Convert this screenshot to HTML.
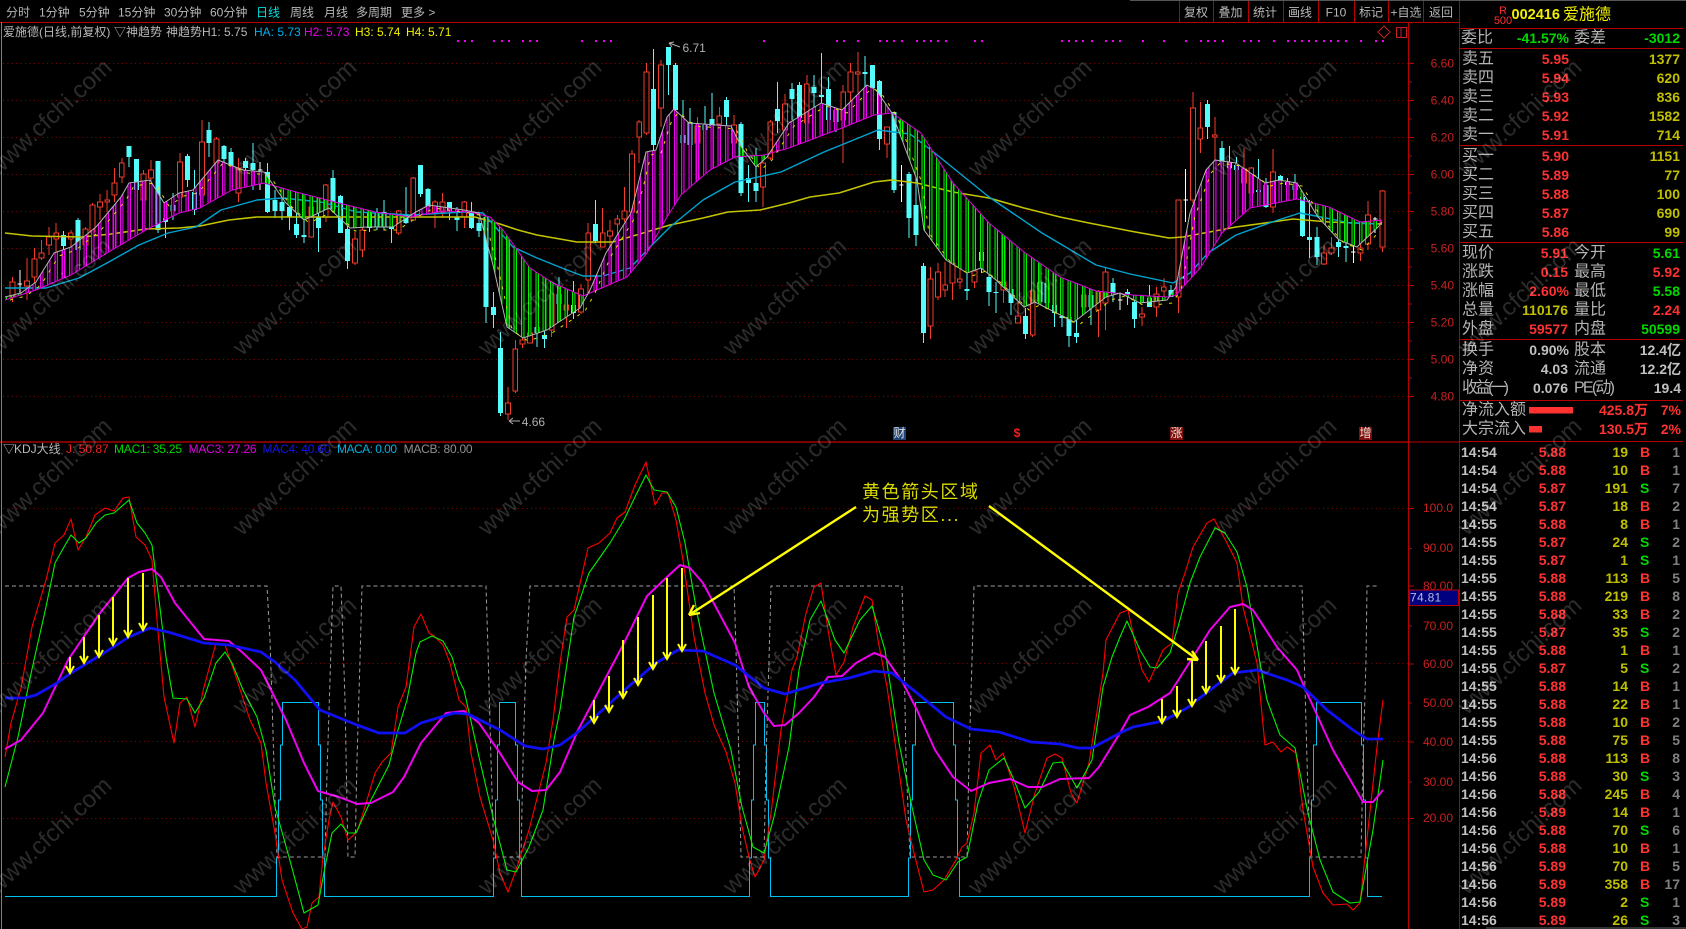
<!DOCTYPE html>
<html><head><meta charset="utf-8"><title>爱施德</title>
<style>
html,body{margin:0;padding:0;background:#000;width:1686px;height:929px;overflow:hidden}
svg{display:block}
text{font-family:"Liberation Sans","Noto Sans CJK SC",sans-serif;dominant-baseline:central;white-space:pre}
.v{vector-effect:non-scaling-stroke}
.e{text-anchor:end}.m{text-anchor:middle}
.tb text{font-size:12px;fill:#b8b8b8}
.ax text{font-size:12px;fill:#c82020;text-anchor:end}
.lb text{font-size:16px;fill:#b4b4b4}
.n text{font-size:14px;font-weight:bold;text-anchor:end}
.r{fill:#ff3232}.g{fill:#00d800}.y{fill:#c0c000}.w{fill:#c0c0c0}.d{fill:#808080}
.tk text{font-size:14px;font-weight:bold}
.wm text{font-size:24px;fill:#fff;fill-opacity:.17}
polyline{stroke-linejoin:round}
</style></head><body>
<svg xmlns="http://www.w3.org/2000/svg" width="1686" height="929" viewBox="0 0 1686 929">
<defs>
<clipPath id="hc"><path clip-rule="evenodd" d="M5 297L21 293 36 282 54 253 71 247 96 227 121 197 129 183 150 180 164 203 179 193 193 190 218 160 243 170 264 172 286 203 304 220 329 208 350 228 368 227 393 227 414 213 429 205 464 210 479 213 493 265 507 327 523 338 547 330 580 308 590 290 606 253 631 213 646 152 656 150 667 117 674 109 689 123 731 126 742 148 756 167 767 157 789 123 821 103 842 110 867 85 876 90 892 113 917 180 924 230 946 260 967 273 981 268 996 280 1024 307 1035 302 1074 322 1106 297 1120 293 1140 303 1167 300 1176 287 1190 213 1206 170 1215 160 1236 163 1265 183 1279 180 1297 183 1318 217 1339 240 1357 247 1378 227 1382 222 1382 220 1360 222 1329 207 1297 199 1250 208 1222 233 1201 267 1176 295 1167 297 1133 295 1096 291 1060 277 1024 252 989 223 953 183 921 133 892 113 874 115 842 128 789 148 764 155 735 157 710 170 681 195 667 217 647 253 627 277 597 290 583 296 553 283 530 268 503 230 490 217 470 212 443 211 411 217 375 212 339 203 296 192 264 183 232 190 200 208 179 213 146 230 107 253 71 275 36 290 14 297 5 300Z"/></clipPath>
</defs>
<rect width="1686" height="929" fill="#000"/>

<!-- grid -->
<path fill="none" stroke="#8c0808" stroke-dasharray="1 3.4" d="M3 63.5H1408M3 100.5H1408M3 137.5H1408M3 174.5H1408M3 211.5H1408M3 248.5H1408M3 285.5H1408M3 322.5H1408M3 359.5H1408M3 396.5H1408M3 508.5H1408M3 663.5H1408M3 741.5H1408M3 818.5H1408"/>

<!-- candles -->
<g transform="translate(5.2 0) scale(7.287 1)" fill="none" shape-rendering="crispEdges">
<path class="v" stroke="#f03c28" stroke-width="1" d="M1 277V302M3 258V300M4 248V287M5 240V260M6 227V255M7 223V253M9 230V248M11 227V252M12 203V233M13 194V220M14 190V212M15 168V202M16 158V183M19 170V202M20 160V197M24 153V213M27 120V197M29 137V173M32 158V202M42 197V237M44 184V222M48 232V265M49 213V257M54 210V235M56 177V221M59 200V228M60 193V217M63 201V228M69 387V420M70 340V393M71 335V348M72 325V343M75 285V337M77 300V328M79 284V314M80 223V293M82 208V247M83 220V260M84 215V240M85 187V222M86 150V213M87 120V163M88 63V135M90 60V127M95 117V143M98 107V127M100 115V147M104 155V207M105 120V160M107 94V143M110 75V135M115 85V163M116 63V107M117 52V93M121 127V158M127 267V339M128 263V300M129 262V297M130 262V300M131 267V289M133 268V288M137 280V303M139 297V323M141 290V337M148 287V313M150 290V337M151 267V330M156 307V326M158 287V317M159 278V298M161 200V313M163 92V203M164 102V153M166 117V163M170 148V200M171 167V197M174 149V213M181 245V265M182 237V255M186 233V261M187 201V250M189 190V252"/>
<path class="v" stroke="#f03c28" fill="#000" stroke-width="1" d="M.67 282h.66V297h-.66zM2.67 281h.66V286h-.66zM3.67 259h.66V277h-.66zM4.67 253h.66V258h-.66zM5.67 237h.66V245h-.66zM6.67 233h.66V239h-.66zM8.67 233h.66V239h-.66zM10.67 229h.66V245h-.66zM11.67 205h.66V232h-.66zM12.67 202h.66V207h-.66zM13.67 200h.66V202h-.66zM14.67 183h.66V195h-.66zM15.67 163h.66V177h-.66zM18.67 174h.66V200h-.66zM19.67 170h.66V178h-.66zM23.67 162h.66V197h-.66zM26.67 142h.66V195h-.66zM28.67 139h.66V163h-.66zM31.67 168h.66V193h-.66zM41.67 207h.66V237h-.66zM43.67 185h.66V217h-.66zM47.67 239h.66V263h-.66zM48.67 230h.66V250h-.66zM53.67 211h.66V233h-.66zM55.67 178h.66V220h-.66zM58.67 202h.66V213h-.66zM59.67 202h.66V212h-.66zM62.67 202h.66V217h-.66zM68.67 403h.66V414h-.66zM69.67 349h.66V391h-.66zM70.67 340h.66V344h-.66zM71.67 333h.66V343h-.66zM74.67 294h.66V330h-.66zM76.67 305h.66V310h-.66zM78.67 289h.66V312h-.66zM79.67 233h.66V280h-.66zM81.67 233h.66V247h-.66zM82.67 231h.66V236h-.66zM83.67 219h.66V224h-.66zM84.67 211h.66V219h-.66zM85.67 154h.66V212h-.66zM86.67 122h.66V137h-.66zM87.67 72h.66V133h-.66zM89.67 65h.66V108h-.66zM94.67 126h.66V143h-.66zM97.67 116h.66V124h-.66zM99.67 125h.66V143h-.66zM103.67 163h.66V187h-.66zM104.67 122h.66V158h-.66zM106.67 104h.66V130h-.66zM109.67 84h.66V123h-.66zM114.67 92h.66V120h-.66zM115.67 72h.66V92h-.66zM116.67 72h.66V74h-.66zM120.67 127h.66V144h-.66zM126.67 279h.66V326h-.66zM127.67 272h.66V297h-.66zM128.67 285h.66V290h-.66zM129.67 263h.66V283h-.66zM130.67 279h.66V282h-.66zM132.67 271h.66V282h-.66zM136.67 282h.66V290h-.66zM138.67 316h.66V323h-.66zM140.67 291h.66V335h-.66zM147.67 295h.66V307h-.66zM149.67 292h.66V310h-.66zM150.67 272h.66V303h-.66zM155.67 314h.66V317h-.66zM157.67 294h.66V307h-.66zM158.67 287h.66V291h-.66zM160.67 200h.66V297h-.66zM162.67 108h.66V200h-.66zM163.67 128h.66V139h-.66zM165.67 135h.66V137h-.66zM169.67 169h.66V183h-.66zM170.67 168h.66V193h-.66zM173.67 172h.66V207h-.66zM180.67 253h.66V264h-.66zM181.67 248h.66V253h-.66zM185.67 248h.66V253h-.66zM186.67 215h.66V244h-.66zM188.67 191h.66V247h-.66z"/>
<path class="v" stroke="#54fcfc" stroke-width="1" d="M8 231V252M10 218V258M17 146V167M18 159V200M21 161V233M22 202V238M23 193V220M25 154V187M26 170V215M28 122V157M30 145V167M31 148V187M33 158V177M34 143V190M36 163V213M37 190V218M38 197V220M39 190V230M40 200V238M41 213V243M43 207V252M45 170V210M46 195V233M47 213V269M50 210V232M51 208V230M52 200V230M53 215V243M55 187V224M57 165V197M58 188V213M61 202V220M62 207V231M64 202V229M65 218V237M66 217V323M67 292V328M68 332V416M73 327V347M74 323V348M76 277V315M78 281V319M81 200V243M89 49V153M91 47V95M92 63V127M93 100V143M94 108V145M96 106V145M97 93V130M99 97V125M101 122V196M102 165V202M103 148V202M106 82V133M108 83V120M109 82V120M111 75V113M112 53V115M113 77V123M114 108V132M118 56V93M119 65V92M120 80V150M122 112V193M124 172V238M125 140V246M126 263V343M132 273V300M134 243V273M135 267V306M136 282V313M138 283V315M140 308V339M142 280V305M143 275V305M144 293V327M145 297V327M146 310V347M147 310V343M149 290V325M152 278V302M154 289V305M155 295V328M157 285V307M160 285V297M165 100V139M167 141V173M168 146V180M169 157V180M172 159V200M173 178V208M175 175V187M176 178V195M177 174V197M178 197V237M179 200V258M180 227V265M183 235V257M184 243V262"/>
<path class="v" stroke="#54fcfc" stroke-width="5" d="M8 235V246M10 220V250M17 146V157M18 159V190M21 161V230M22 218V222M23 205V211M25 156V180M26 192V210M28 130V143M30 146V159M31 152V166M33 161V168M34 163V170M36 172V212M37 200V211M38 202V211M39 207V217M40 224V235M41 235V237M43 217V228M45 178V209M46 196V233M47 229V261M50 213V228M51 213V227M52 212V227M53 227V229M55 215V223M57 165V194M58 189V207M61 202V211M62 217V220M64 212V228M65 223V231M66 217V307M67 307V315M68 348V413M73 327V333M74 335V339M76 294V304M78 305V313M81 224V241M89 89V145M91 47V65M92 65V110M93 135V143M94 122V145M96 125V130M97 119V126M99 100V117M101 124V193M102 178V183M103 183V191M106 109V121M108 89V99M109 85V118M111 87V93M112 95V97M113 89V120M114 110V122M118 72V74M119 65V88M120 81V139M122 112V190M124 174V218M125 205V235M126 266V333M132 289V291M134 252V261M135 277V292M136 292V293M138 289V303M140 316V334M142 282V302M143 283V303M144 305V313M145 316V318M146 317V336M147 333V337M149 295V307M152 283V293M154 292V294M155 302V319M157 298V307M160 290V297M165 104V127M167 148V162M168 162V168M169 165V170M172 190V192M173 185V207M175 176V181M176 182V185M177 185V190M178 197V236M179 237V240M180 237V257M183 242V247M184 246V248"/>
<path class="v" stroke="#fff" stroke-width="1" d="M2 270V293M1.7 284h.6M35 162V190M34.7 170h.6M123 165V202M122.7 185h.6M153 293V310M152.7 300h.6M162 169V222M161.7 200h.6M185 233V263M184.7 252h.6M188 217V233M187.7 219h.6"/>
</g>

<!-- upper MAs -->
<polyline fill="none" stroke="#c4c400" stroke-width="1.6" points="5,233 32,236 82,237 111,234 146,229 179,228 200,226 229,220 257,217 357,217 411,217 475,217 500,224 518,230 537,235 577,242 613,242 643,233 670,225 703,218 728,212 760,210 789,203 810,197 839,193 874,182 892,180 917,183 953,192 989,198 1024,208 1060,217 1089,223 1130,231 1169,238 1183,237 1236,227 1272,222 1293,219 1329,222 1382,224"/>
<polyline fill="none" stroke="#00a4d0" stroke-width="1.4" points="5,288 46,288 79,278 107,263 139,245 168,233 196,227 221,210 257,200 282,198 321,202 357,212 411,215 464,212 483,213 513,247 537,258 567,270 583,276 603,276 630,268 650,247 670,227 703,200 735,182 781,172 824,152 878,130 910,134 931,150 989,197 1042,233 1096,265 1130,274 1173,283 1190,273 1208,253 1236,235 1272,222 1300,213 1321,217 1350,223 1378,224"/>

<!-- histogram sticks -->
<g clip-path="url(#hc)" fill="none" shape-rendering="crispEdges">
<path stroke="#f000f0" stroke-width="420" stroke-dasharray="3.6 3.687" d="M25.26 210H262.2M411.5 210H466.3M586.4 210H735.9M768.5 210H888.9M1176.6 210H1297M1380.7 210H1384.5"/>
<path stroke="#00f000" stroke-width="420" stroke-dasharray="3.6 3.687" d="M3.4 210H21.8M265.7 210H408M469.8 210H582.9M739.4 210H765M892.4 210H1173.1M1300.5 210H1377.2"/>
<path stroke="#000" stroke-opacity=".8" stroke-width="420" stroke-dasharray="1.4 5.887" d="M4.5 210H1384"/>
</g>
<polyline fill="none" stroke="#e000e0" points="5,300 14,297 36,290 71,275 107,253 146,230 179,213 200,208 232,190 264,183 296,192 339,203 375,212 411,217 443,211 470,212 490,217 503,230 530,268 553,283 583,296 597,290 627,277 647,253 667,217 681,195 710,170 735,157 764,155 789,148 842,128 874,115 892,113 921,133 953,183 989,223 1024,252 1060,277 1096,291 1133,295 1167,297 1176,295 1201,267 1222,233 1250,208 1297,199 1329,207 1360,222 1382,220"/>
<polyline fill="none" stroke="#b4b4b4" points="5,297 21,293 36,282 54,253 71,247 96,227 121,197 129,183 150,180 164,203 179,193 193,190 218,160 243,170 264,172 286,203 304,220 329,208 350,228 368,227 393,227 414,213 429,205 464,210 479,213 493,265 507,327 523,338 547,330 580,308 590,290 606,253 631,213 646,152 656,150 667,117 674,109 689,123 731,126 742,148 756,167 767,157 789,123 821,103 842,110 867,85 876,90 892,113 917,180 924,230 946,260 967,273 981,268 996,280 1024,307 1035,302 1074,322 1106,297 1120,293 1140,303 1167,300 1176,287 1190,213 1206,170 1215,160 1236,163 1265,183 1279,180 1297,183 1318,217 1339,240 1357,247 1378,227 1382,222"/>
<polyline fill="none" stroke="#e0e000" stroke-dasharray="3 7" transform="translate(5 3)" points="5,297 21,293 36,282 54,253 71,247 96,227 121,197 129,183 150,180 164,203 179,193 193,190 218,160 243,170 264,172 286,203 304,220 329,208 350,228 368,227 393,227 414,213 429,205 464,210 479,213 493,265 507,327 523,338 547,330 580,308 590,290 606,253 631,213 646,152 656,150 667,117 674,109 689,123 731,126 742,148 756,167 767,157 789,123 821,103 842,110 867,85 876,90 892,113 917,180 924,230 946,260 967,273 981,268 996,280 1024,307 1035,302 1074,322 1106,297 1120,293 1140,303 1167,300 1176,287 1190,213 1206,170 1215,160 1236,163 1265,183 1279,180 1297,183 1318,217 1339,240 1357,247 1373,230"/>

<!-- magenta dots -->
<path fill="none" stroke="#f000f0" stroke-width="2" shape-rendering="crispEdges" d="M457 41h2M464 41h2M471 41h2M493 41h2M501 41h2M508 41h2M522 41h2M529 41h2M536 41h2M581 41h2M595 41h2M603 41h2M610 41h2M763 41h2M836 41h2M843 41h2M857 41h2M879 41h2M886 41h2M893 41h2M901 41h2M916 41h2M923 41h2M930 41h2M937 41h2M945 41h2M974 41h2M981 41h2M1061 41h2M1068 41h2M1075 41h2M1082 41h2M1091 41h2M1105 41h2M1112 41h2M1119 41h2M1142 41h2M1163 41h2M1185 41h2M1200 41h2M1207 41h2M1214 41h2M1222 41h2M1243 41h2M1250 41h2M1258 41h2M1273 41h2M1287 41h2M1294 41h2M1301 41h2M1308 41h2M1315 41h2M1323 41h2M1330 41h2M1337 41h2M1345 41h2M1360 41h2M1375 41h2M1382 41h2"/>

<!-- high / low markers -->
<path fill="none" stroke="#b0b0b0" d="M669 43L680 47M669 43l5-1M669 43l3 4M509 421H520M509 421l4-3M509 421l4 3"/>
<text x="682.5" y="48" font-size="12" fill="#b0b0b0">6.71</text>
<text x="521.7" y="422" font-size="12" fill="#b0b0b0">4.66</text>

<!-- event tags -->
<rect x="893" y="427" width="13" height="13" fill="#1f4478"/>
<text x="899.5" y="433" font-size="12" fill="#e0e0e0" class="m">财</text>
<text x="1017" y="433" font-size="12" font-weight="bold" fill="#f02020" class="m">$</text>
<rect x="1170" y="427" width="13" height="13" fill="#801010"/>
<text x="1176.5" y="433" font-size="12" fill="#e8e0d0" class="m">涨</text>
<rect x="1359" y="427" width="13" height="13" fill="#801010"/>
<text x="1365.5" y="433" font-size="12" fill="#e8e0d0" class="m">增</text>

<!-- lower pane -->
<path fill="none" stroke="#00c0f0" stroke-width="1" shape-rendering="crispEdges" d="M5 896.5H276.5V858H278.5V800H280.5V745H282.5V702.5H318.5V745H320.5V800H322.5V858H324.5V896.5H493.5V858H495.5V800H497.5V745H499.5V702.5H515.5V745H517.5V800H519.5V858H521.5V896.5H749.5V858H751.5V800H753.5V745H755.5V702.5H764.5V745H766.5V800H768.5V858H770.5V896.5H908.5V858H910.5V800H912.5V745H915.5V702.5H953.5V745H955.5V800H957.5V858H959.5V896.5H1309.5V858H1311.5V800H1313.5V745H1316.5V702.5H1361.5V745H1363.5V800H1365.5V858H1367.5V896.5H1382"/>
<path fill="none" stroke="#9c9c9c" stroke-dasharray="4 3" d="M5 586H267L270 640 272 700 275 800 277 857H325L327 773 330 680 333 586H341L343 640 345 700 348 857H355L357 760 360 660 362 586H486L488 650 491 760 494 857H521L523 760 526 660 530 586H734L736 650 739 760 741 857H764L766 760 769 660 771 586H902L904 650 906 760 910 857H967L969 760 972 660 974 586H1302L1304 650 1307 760 1310 857H1361L1363 760 1366 660 1367 586H1378"/>
<polyline fill="none" stroke="#ff0000" stroke-width="1.1" points="5,757 11,723 21,688 32,627 46,580 55,543 64,535 71,519 78,550 86,537 95,515 105,508 114,511 123,498 129,497 136,537 145,545 152,560 157,620 164,697 174,743 180,703 187,697 195,727 204,687 216,643 225,645 236,677 250,720 261,743 266,783 275,833 282,880 293,913 302,929 307,927 312,903 319,897 323,857 329,820 333,802 341,817 348,840 357,832 364,810 375,773 382,762 391,753 398,707 406,687 414,627 421,614 429,633 434,636 443,645 450,663 459,700 466,707 471,753 480,797 493,840 500,873 508,892 516,870 529,830 546,763 553,720 560,663 567,617 574,610 588,548 599,543 610,533 617,518 625,512 635,485 646,462 655,505 662,493 668,493 676,520 683,560 694,637 705,693 714,725 726,752 735,783 742,827 749,857 755,877 764,860 771,813 781,730 792,670 797,657 806,613 814,587 821,583 828,630 836,675 844,662 853,627 865,596 872,600 878,640 887,687 896,750 906,820 914,853 924,892 933,890 944,880 956,860 962,847 967,843 974,813 981,753 990,745 996,760 1003,753 1014,787 1025,833 1035,793 1047,758 1055,754 1062,758 1071,793 1077,803 1089,763 1103,673 1106,640 1120,613 1128,610 1135,643 1142,670 1149,682 1163,650 1172,643 1178,593 1185,573 1193,547 1207,523 1214,519 1227,543 1237,563 1243,607 1257,663 1265,745 1273,742 1281,752 1287,747 1296,753 1303,810 1313,867 1323,893 1333,905 1347,904 1353,910 1360,903 1365,857 1377,747 1383,700"/>
<polyline fill="none" stroke="#00f000" stroke-width="1.1" points="5,787 18,737 29,683 34,660 46,607 55,563 64,547 71,535 79,543 86,538 96,523 105,515 114,513 129,500 137,523 145,533 152,545 159,600 166,657 173,698 187,699 195,713 204,698 216,663 225,652 232,663 243,690 257,717 266,750 275,807 289,857 304,913 318,905 325,867 332,833 341,824 348,833 356,833 371,800 389,765 398,730 407,700 416,653 420,642 432,636 443,641 452,657 459,680 464,690 479,757 493,817 507,870 516,872 529,847 543,810 554,740 560,710 574,617 589,573 596,563 610,543 624,520 635,497 646,475 654,490 667,492 676,507 685,543 697,613 714,693 731,750 742,807 753,847 764,853 774,817 789,747 799,670 810,620 821,601 835,640 844,653 860,620 872,606 885,650 899,743 912,807 924,860 933,875 946,880 958,862 967,857 978,803 989,770 1004,758 1014,780 1025,808 1039,792 1053,763 1062,762 1077,788 1092,760 1103,687 1112,657 1120,637 1127,621 1140,650 1150,667 1157,668 1170,653 1178,627 1190,583 1200,557 1215,528 1225,533 1237,552 1247,587 1260,663 1267,700 1280,735 1295,748 1308,813 1320,860 1333,892 1350,903 1360,902 1373,830 1383,760"/>
<polyline fill="none" stroke="#f000f0" stroke-width="2" points="5,749 21,740 43,713 68,660 100,613 128,578 139,572 152,569 161,577 175,603 204,639 229,641 243,653 261,670 286,720 304,763 318,791 339,797 357,804 371,803 393,792 404,777 421,743 446,713 464,711 479,723 500,753 518,782 532,791 546,790 560,772 578,730 594,700 624,643 647,596 667,577 680,565 690,568 703,583 735,643 749,687 764,713 774,726 785,725 799,713 814,697 828,677 842,676 856,663 874,653 885,657 903,683 917,710 935,750 953,777 971,791 989,783 1010,779 1028,787 1042,787 1060,779 1089,778 1099,767 1120,733 1130,715 1148,707 1170,693 1193,657 1210,630 1230,607 1243,604 1253,610 1277,647 1297,670 1307,693 1333,750 1363,802 1373,802 1383,790"/>
<polyline fill="none" stroke="#1010f4" stroke-width="2.8" points="5,698 25,698 36,695 57,683 71,673 104,653 129,637 150,628 168,632 204,643 229,645 261,652 275,662 295,680 320,710 357,725 379,733 405,733 421,723 454,713 468,714 500,730 525,746 543,749 560,745 578,732 628,687 656,663 678,650 703,651 735,665 764,688 785,694 821,683 849,678 874,671 892,673 917,693 946,717 971,729 999,732 1031,742 1060,744 1078,748 1092,748 1120,733 1133,727 1163,721 1187,708 1210,690 1233,673 1257,670 1287,680 1303,687 1327,710 1353,730 1367,739 1383,739"/>

<!-- yellow arrows -->
<path fill="none" stroke="#ffff00" stroke-width="2" d="M70 657V673m-4-7l4 7l4-7M84 637V663m-4-7l4 7l4-7M99 615V657m-4-7l4 7l4-7M113 597V645m-4-7l4 7l4-7M128 578V637m-4-7l4 7l4-7M143 573V630m-4-7l4 7l4-7M594 700V723m-4-7l4 7l4-7M609 676V712m-4-7l4 7l4-7M623 640V698m-4-7l4 7l4-7M638 617V685m-4-7l4 7l4-7M653 595V669m-4-7l4 7l4-7M667 578V659m-4-7l4 7l4-7M682 568V651m-4-7l4 7l4-7M1162 699V723m-4-7l4 7l4-7M1177 686V717m-4-7l4 7l4-7M1192 660V706m-4-7l4 7l4-7M1206 641V693m-4-7l4 7l4-7M1221 626V682m-4-7l4 7l4-7M1235 609V674m-4-7l4 7l4-7"/>
<path fill="none" stroke="#ffff00" stroke-width="2.4" d="M856 507L689 615M689 615l11-2M689 615l5-10M989 506L1198 660M1198 660l-11-1M1198 660l-6-9"/>
<text x="862" y="492" font-size="18" fill="#dcdc00" letter-spacing="1.6">黄色箭头区域</text>
<text x="862" y="515" font-size="18" fill="#dcdc00" letter-spacing="1.6">为强势区...</text>

<!-- structural lines -->
<path fill="none" stroke="#7c0000" stroke-width="2" d="M0 442H1409"/>
<path fill="none" stroke="#b80000" shape-rendering="crispEdges" d="M0 22.5H1460M1408.5 22V929M1459.5 0V929M1409 442H1459M1460 28.5H1683M1460 48.5H1683M1460 145.5H1683M1460 242.5H1683M1460 339.5H1683M1460 400.5H1683M1460 441.5H1683M1179.5 0V22M1213.5 0V22M1248.5 0V22M1283.5 0V22M1318.5 0V22M1354.5 0V22M1388.5 0V22M1423.5 0V22"/>
<path fill="none" stroke="#b80000" shape-rendering="crispEdges" d="M1409 63.5h5M1409 82h3M1409 100.5h5M1409 119h3M1409 137.5h5M1409 156h3M1409 174.5h5M1409 193h3M1409 211.5h5M1409 230h3M1409 248.5h5M1409 267h3M1409 285.5h5M1409 304h3M1409 322.5h5M1409 341h3M1409 359.5h5M1409 378h3M1409 396.5h5M1409 508.5h5M1409 548.5h3M1409 586h5M1409 626h3M1409 664h5M1409 703h3M1409 742h5M1409 782h3M1409 818.5h5"/>
<path fill="none" stroke="#808080" d="M1.5 22V929"/>
<path fill="none" stroke="#555" d="M1130 .5H1686"/>
<rect x="1486" y="927" width="200" height="2" fill="#333"/>
<path fill="none" stroke="#c82020" d="M1384 26l6 6l-6 6l-6-6zM1396.5 27.5h10v10h-10zM1401 27.5v10"/>

<!-- toolbar -->
<g class="tb">
<text x="6" y="12.5">分时</text><text x="39" y="12.5">1分钟</text><text x="79" y="12.5">5分钟</text><text x="118" y="12.5">15分钟</text><text x="164" y="12.5">30分钟</text><text x="210" y="12.5">60分钟</text><text x="256" y="12.5" style="fill:#00e0e0">日线</text><text x="290" y="12.5">周线</text><text x="324" y="12.5">月线</text><text x="356" y="12.5">多周期</text><text x="401" y="12.5">更多 &gt;</text>
<text x="1196" y="12.5" class="m">复权</text><text x="1230.5" y="12.5" class="m">叠加</text><text x="1265" y="12.5" class="m">统计</text><text x="1300" y="12.5" class="m">画线</text><text x="1336" y="12.5" class="m">F10</text><text x="1371" y="12.5" class="m">标记</text><text x="1406" y="12.5" class="m">+自选</text><text x="1441" y="12.5" class="m">返回</text>
</g>

<!-- chart titles -->
<g font-size="12">
<text x="3" y="32" font-size="12" fill="#b8b8b8">爱施德(日线,前复权)</text>
<text x="114" y="32" font-size="12" fill="#b8b8b8">▽神趋势</text>
<text x="166" y="32" font-size="12" fill="#b8b8b8">神趋势H1: 5.75</text>
<text x="254" y="32" font-size="12" fill="#00b0e8">HA: 5.73</text>
<text x="304" y="32" font-size="12" fill="#f000f0">H2: 5.73</text>
<text x="355" y="32" font-size="12" fill="#f0f000">H3: 5.74</text>
<text x="406" y="32" font-size="12" fill="#f0f000">H4: 5.71</text>
<text x="3" y="449" font-size="12" fill="#b8b8b8">▽</text>
<text x="14" y="449" font-size="12" fill="#b8b8b8">KDJ大线</text>
<text x="66" y="449" font-size="12" fill="#f02020">J: 50.87</text>
<text x="114" y="449" font-size="12" fill="#00d800" textLength="68">MAC1: 35.25</text>
<text x="188.6" y="449" font-size="12" fill="#e000e0" textLength="68">MAC3: 27.26</text>
<text x="262.5" y="449" font-size="12" fill="#1414f0" textLength="68">MAC4: 40.60</text>
<text x="337" y="449" font-size="12" fill="#00b0e0" textLength="60">MACA: 0.00</text>
<text x="403.6" y="449" font-size="12" fill="#909090" textLength="69">MACB: 80.00</text>
</g>

<!-- axis labels -->
<g class="ax">
<text x="1454" y="63.5">6.60</text><text x="1454" y="100.5">6.40</text><text x="1454" y="137.5">6.20</text><text x="1454" y="174.5">6.00</text><text x="1454" y="211.5">5.80</text><text x="1454" y="248.5">5.60</text><text x="1454" y="285.5">5.40</text><text x="1454" y="322.5">5.20</text><text x="1454" y="359.5">5.00</text><text x="1454" y="396.5">4.80</text>
<text x="1453" y="508">100.0</text><text x="1453" y="548">90.00</text><text x="1453" y="586">80.00</text><text x="1453" y="626">70.00</text><text x="1453" y="664">60.00</text><text x="1453" y="703">50.00</text><text x="1453" y="742">40.00</text><text x="1453" y="782">30.00</text><text x="1453" y="818">20.00</text>
</g>
<rect x="1409.5" y="590" width="49" height="15.5" fill="#000080" stroke="#b80000"/>
<text x="1410" y="597.5" font-size="12" fill="#b4bce0" letter-spacing=".3">74.81</text>

<!-- right panel header -->
<text x="1503" y="11" font-size="11" fill="#ff3030" class="m">R</text>
<text x="1503" y="21" font-size="11" fill="#ff3030" class="m">500</text>
<text x="1511.5" y="15" font-size="14.5" font-weight="bold" fill="#f0f000">002416</text>
<text x="1563" y="15" font-size="16" fill="#f0f000">爱施德</text>

<g class="lb">
<text x="1461" y="38">委比</text><text x="1574" y="38">委差</text>
<text x="1462" y="59">卖五</text><text x="1462" y="78">卖四</text><text x="1462" y="97">卖三</text><text x="1462" y="116">卖二</text><text x="1462" y="135">卖一</text>
<text x="1462" y="156">买一</text><text x="1462" y="175">买二</text><text x="1462" y="194">买三</text><text x="1462" y="213">买四</text><text x="1462" y="232">买五</text>
<text x="1462" y="253">现价</text><text x="1462" y="272">涨跌</text><text x="1462" y="291">涨幅</text><text x="1462" y="310">总量</text><text x="1462" y="329">外盘</text>
<text x="1574" y="253">今开</text><text x="1574" y="272">最高</text><text x="1574" y="291">最低</text><text x="1574" y="310">量比</text><text x="1574" y="329">内盘</text>
<text x="1462" y="350">换手</text><text x="1462" y="369">净资</text><text x="1462" y="388" textLength="47">收益(一)</text>
<text x="1574" y="350">股本</text><text x="1574" y="369">流通</text><text x="1574" y="388" textLength="41">PE(动)</text>
<text x="1462" y="410">净流入额</text><text x="1462" y="429">大宗流入</text>
</g>
<g class="n">
<text x="1569" y="38" class="g">-41.57%</text><text x="1680" y="38" class="g">-3012</text>
<text x="1569" y="59" class="r">5.95</text><text x="1569" y="78" class="r">5.94</text><text x="1569" y="97" class="r">5.93</text><text x="1569" y="116" class="r">5.92</text><text x="1569" y="135" class="r">5.91</text>
<text x="1680" y="59" class="y">1377</text><text x="1680" y="78" class="y">620</text><text x="1680" y="97" class="y">836</text><text x="1680" y="116" class="y">1582</text><text x="1680" y="135" class="y">714</text>
<text x="1569" y="156" class="r">5.90</text><text x="1569" y="175" class="r">5.89</text><text x="1569" y="194" class="r">5.88</text><text x="1569" y="213" class="r">5.87</text><text x="1569" y="232" class="r">5.86</text>
<text x="1680" y="156" class="y">1151</text><text x="1680" y="175" class="y">77</text><text x="1680" y="194" class="y">100</text><text x="1680" y="213" class="y">690</text><text x="1680" y="232" class="y">99</text>
<text x="1568" y="253" class="r">5.91</text><text x="1568" y="272" class="r">0.15</text><text x="1569" y="291" class="r">2.60%</text><text x="1568" y="310" class="y">110176</text><text x="1568" y="329" class="r">59577</text>
<text x="1680" y="253" class="g">5.61</text><text x="1680" y="272" class="r">5.92</text><text x="1680" y="291" class="g">5.58</text><text x="1680" y="310" class="r">2.24</text><text x="1680" y="329" class="g">50599</text>
<text x="1569" y="350" class="w">0.90%</text><text x="1568" y="369" class="w">4.03</text><text x="1568" y="388" class="w">0.076</text>
<text x="1681" y="350" class="w">12.4亿</text><text x="1681" y="369" class="w">12.2亿</text><text x="1681" y="388" class="w">19.4</text>
<text x="1648" y="410" class="r">425.8万</text><text x="1681" y="410" class="r">7%</text>
<text x="1648" y="429" class="r">130.5万</text><text x="1681" y="429" class="r">2%</text>
</g>
<rect x="1529" y="407" width="44" height="6.5" fill="#ff3232"/>
<rect x="1529" y="426" width="13" height="6.5" fill="#ff3232"/>

<!-- ticks -->
<g class="tk">
<g class="w"><text x="1461" y="452">14:54</text><text x="1461" y="470">14:54</text><text x="1461" y="488">14:54</text><text x="1461" y="506">14:54</text><text x="1461" y="524">14:55</text><text x="1461" y="542">14:55</text><text x="1461" y="560">14:55</text><text x="1461" y="578">14:55</text><text x="1461" y="596">14:55</text><text x="1461" y="614">14:55</text><text x="1461" y="632">14:55</text><text x="1461" y="650">14:55</text><text x="1461" y="668">14:55</text><text x="1461" y="686">14:55</text><text x="1461" y="704">14:55</text><text x="1461" y="722">14:55</text><text x="1461" y="740">14:55</text><text x="1461" y="758">14:56</text><text x="1461" y="776">14:56</text><text x="1461" y="794">14:56</text><text x="1461" y="812">14:56</text><text x="1461" y="830">14:56</text><text x="1461" y="848">14:56</text><text x="1461" y="866">14:56</text><text x="1461" y="884">14:56</text><text x="1461" y="902">14:56</text><text x="1461" y="920">14:56</text></g>
<g class="r e"><text x="1566" y="452">5.88</text><text x="1566" y="470">5.88</text><text x="1566" y="488">5.87</text><text x="1566" y="506">5.87</text><text x="1566" y="524">5.88</text><text x="1566" y="542">5.87</text><text x="1566" y="560">5.87</text><text x="1566" y="578">5.88</text><text x="1566" y="596">5.88</text><text x="1566" y="614">5.88</text><text x="1566" y="632">5.87</text><text x="1566" y="650">5.88</text><text x="1566" y="668">5.87</text><text x="1566" y="686">5.88</text><text x="1566" y="704">5.88</text><text x="1566" y="722">5.88</text><text x="1566" y="740">5.88</text><text x="1566" y="758">5.88</text><text x="1566" y="776">5.88</text><text x="1566" y="794">5.88</text><text x="1566" y="812">5.89</text><text x="1566" y="830">5.88</text><text x="1566" y="848">5.88</text><text x="1566" y="866">5.89</text><text x="1566" y="884">5.89</text><text x="1566" y="902">5.89</text><text x="1566" y="920">5.89</text></g>
<g class="y e"><text x="1628" y="452">19</text><text x="1628" y="470">10</text><text x="1628" y="488">191</text><text x="1628" y="506">18</text><text x="1628" y="524">8</text><text x="1628" y="542">24</text><text x="1628" y="560">1</text><text x="1628" y="578">113</text><text x="1628" y="596">219</text><text x="1628" y="614">33</text><text x="1628" y="632">35</text><text x="1628" y="650">1</text><text x="1628" y="668">5</text><text x="1628" y="686">14</text><text x="1628" y="704">22</text><text x="1628" y="722">10</text><text x="1628" y="740">75</text><text x="1628" y="758">113</text><text x="1628" y="776">30</text><text x="1628" y="794">245</text><text x="1628" y="812">14</text><text x="1628" y="830">70</text><text x="1628" y="848">10</text><text x="1628" y="866">70</text><text x="1628" y="884">358</text><text x="1628" y="902">2</text><text x="1628" y="920">26</text></g>
<g><text x="1640" y="452" class="r">B</text><text x="1640" y="470" class="r">B</text><text x="1640" y="488" class="g">S</text><text x="1640" y="506" class="r">B</text><text x="1640" y="524" class="r">B</text><text x="1640" y="542" class="g">S</text><text x="1640" y="560" class="g">S</text><text x="1640" y="578" class="r">B</text><text x="1640" y="596" class="r">B</text><text x="1640" y="614" class="r">B</text><text x="1640" y="632" class="g">S</text><text x="1640" y="650" class="r">B</text><text x="1640" y="668" class="g">S</text><text x="1640" y="686" class="r">B</text><text x="1640" y="704" class="r">B</text><text x="1640" y="722" class="r">B</text><text x="1640" y="740" class="r">B</text><text x="1640" y="758" class="r">B</text><text x="1640" y="776" class="g">S</text><text x="1640" y="794" class="r">B</text><text x="1640" y="812" class="r">B</text><text x="1640" y="830" class="g">S</text><text x="1640" y="848" class="r">B</text><text x="1640" y="866" class="r">B</text><text x="1640" y="884" class="r">B</text><text x="1640" y="902" class="g">S</text><text x="1640" y="920" class="g">S</text></g>
<g class="d e"><text x="1680" y="452">1</text><text x="1680" y="470">1</text><text x="1680" y="488">7</text><text x="1680" y="506">2</text><text x="1680" y="524">1</text><text x="1680" y="542">2</text><text x="1680" y="560">1</text><text x="1680" y="578">5</text><text x="1680" y="596">8</text><text x="1680" y="614">2</text><text x="1680" y="632">2</text><text x="1680" y="650">1</text><text x="1680" y="668">2</text><text x="1680" y="686">1</text><text x="1680" y="704">1</text><text x="1680" y="722">2</text><text x="1680" y="740">5</text><text x="1680" y="758">8</text><text x="1680" y="776">3</text><text x="1680" y="794">4</text><text x="1680" y="812">1</text><text x="1680" y="830">6</text><text x="1680" y="848">1</text><text x="1680" y="866">5</text><text x="1680" y="884">17</text><text x="1680" y="902">1</text><text x="1680" y="920">3</text></g>
</g>

<!-- watermarks -->
<g class="wm">
<text transform="translate(-8 172) rotate(-43)">www.cfchi.com</text><text transform="translate(237 172) rotate(-43)">www.cfchi.com</text><text transform="translate(482 172) rotate(-43)">www.cfchi.com</text><text transform="translate(727 172) rotate(-43)">www.cfchi.com</text><text transform="translate(972 172) rotate(-43)">www.cfchi.com</text><text transform="translate(1217 172) rotate(-43)">www.cfchi.com</text><text transform="translate(1462 172) rotate(-43)">www.cfchi.com</text>
<text transform="translate(-8 351) rotate(-43)">www.cfchi.com</text><text transform="translate(237 351) rotate(-43)">www.cfchi.com</text><text transform="translate(482 351) rotate(-43)">www.cfchi.com</text><text transform="translate(727 351) rotate(-43)">www.cfchi.com</text><text transform="translate(972 351) rotate(-43)">www.cfchi.com</text><text transform="translate(1217 351) rotate(-43)">www.cfchi.com</text><text transform="translate(1462 351) rotate(-43)">www.cfchi.com</text>
<text transform="translate(-8 531) rotate(-43)">www.cfchi.com</text><text transform="translate(237 531) rotate(-43)">www.cfchi.com</text><text transform="translate(482 531) rotate(-43)">www.cfchi.com</text><text transform="translate(727 531) rotate(-43)">www.cfchi.com</text><text transform="translate(972 531) rotate(-43)">www.cfchi.com</text><text transform="translate(1217 531) rotate(-43)">www.cfchi.com</text><text transform="translate(1462 531) rotate(-43)">www.cfchi.com</text>
<text transform="translate(-8 710) rotate(-43)">www.cfchi.com</text><text transform="translate(237 710) rotate(-43)">www.cfchi.com</text><text transform="translate(482 710) rotate(-43)">www.cfchi.com</text><text transform="translate(727 710) rotate(-43)">www.cfchi.com</text><text transform="translate(972 710) rotate(-43)">www.cfchi.com</text><text transform="translate(1217 710) rotate(-43)">www.cfchi.com</text><text transform="translate(1462 710) rotate(-43)">www.cfchi.com</text>
<text transform="translate(-8 890) rotate(-43)">www.cfchi.com</text><text transform="translate(237 890) rotate(-43)">www.cfchi.com</text><text transform="translate(482 890) rotate(-43)">www.cfchi.com</text><text transform="translate(727 890) rotate(-43)">www.cfchi.com</text><text transform="translate(972 890) rotate(-43)">www.cfchi.com</text><text transform="translate(1217 890) rotate(-43)">www.cfchi.com</text><text transform="translate(1462 890) rotate(-43)">www.cfchi.com</text>
</g>
</svg>
</body></html>
